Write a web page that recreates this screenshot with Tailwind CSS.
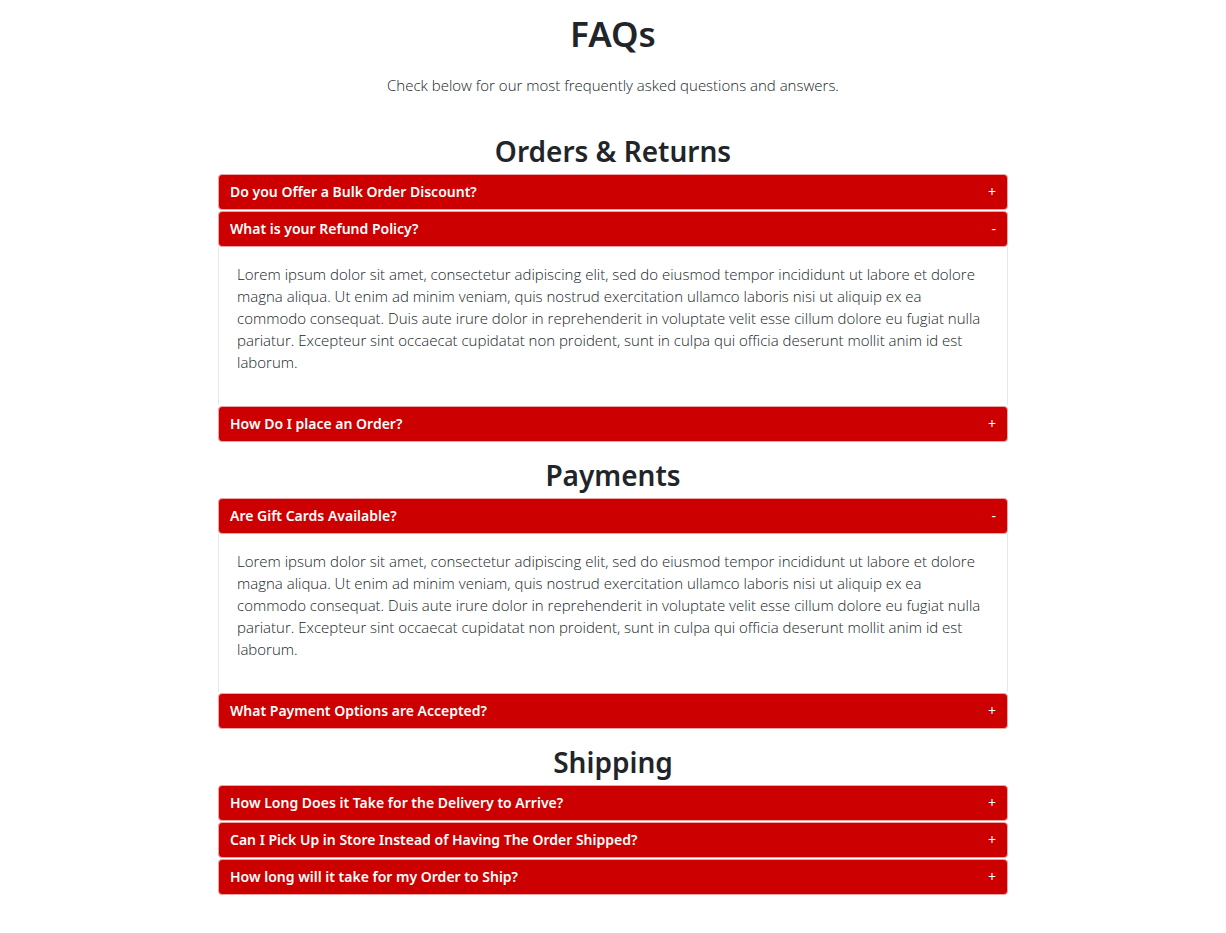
<!DOCTYPE html>
<html lang="en">
<head>
<meta charset="utf-8">
<meta name="viewport" content="width=device-width, initial-scale=1">
<title>FAQs</title>
<script src="https://cdn.jsdelivr.net/npm/@tailwindcss/browser@4"></script>
</head>
<body class="bg-white font-['Open_Sans',sans-serif] text-[15px] leading-[22px] font-light text-[#212529]">
<main class="mx-auto max-w-[790px] pt-3 pb-10">
  <h1 class="text-center font-['Noto_Sans',sans-serif] text-[35px] leading-[44px] font-[650]">FAQs</h1>
  <p class="mt-[18px] text-center">Check below for our most frequently asked questions and answers.</p>

  <section class="mt-9">
    <h2 class="mb-1 text-center font-['Noto_Sans',sans-serif] text-[28px] leading-[38px] font-[650]">Orders &amp; Returns</h2>
    <div class="flex flex-col gap-px">
      <div>
        <h3><button type="button" aria-expanded="false" aria-controls="bulk" class="group flex w-full items-center justify-between rounded-[4px] border border-[#eda6a6] bg-[#cc0000] px-[11px] py-1.5 text-left font-['Noto_Sans',sans-serif] text-[14px] font-[650] text-white"><span>Do you Offer a Bulk Order Discount?</span><span class="font-normal group-aria-expanded:hidden">+</span><span class="hidden font-normal group-aria-expanded:inline">-</span></button></h3>
        <div id="bulk" hidden class="border-x border-gray-200 px-[18px] pt-4 pb-[32px]"></div>
      </div>
      <div>
        <h3><button type="button" aria-expanded="true" aria-controls="refund" class="group flex w-full items-center justify-between rounded-[4px] border border-[#eda6a6] bg-[#cc0000] px-[11px] py-1.5 text-left font-['Noto_Sans',sans-serif] text-[14px] font-[650] text-white"><span>What is your Refund Policy?</span><span class="font-normal group-aria-expanded:hidden">+</span><span class="hidden font-normal group-aria-expanded:inline">-</span></button></h3>
        <div id="refund" class="border-x border-gray-200 px-[18px] pt-4 pb-[32px]"><p>Lorem ipsum dolor sit amet, consectetur adipiscing elit, sed do eiusmod tempor incididunt ut labore et dolore magna aliqua. Ut enim ad minim veniam, quis nostrud exercitation ullamco laboris nisi ut aliquip ex ea commodo consequat. Duis aute irure dolor in reprehenderit in voluptate velit esse cillum dolore eu fugiat nulla pariatur. Excepteur sint occaecat cupidatat non proident, sunt in culpa qui officia deserunt mollit anim id est laborum.</p></div>
      </div>
      <div>
        <h3><button type="button" aria-expanded="false" aria-controls="place" class="group flex w-full items-center justify-between rounded-[4px] border border-[#eda6a6] bg-[#cc0000] px-[11px] py-1.5 text-left font-['Noto_Sans',sans-serif] text-[14px] font-[650] text-white"><span>How Do I place an Order?</span><span class="font-normal group-aria-expanded:hidden">+</span><span class="hidden font-normal group-aria-expanded:inline">-</span></button></h3>
        <div id="place" hidden class="border-x border-gray-200 px-[18px] pt-4 pb-[32px]"></div>
      </div>
    </div>
  </section>

  <section class="mt-3.5">
    <h2 class="mb-1 text-center font-['Noto_Sans',sans-serif] text-[28px] leading-[38px] font-[650]">Payments</h2>
    <div class="flex flex-col gap-px">
      <div>
        <h3><button type="button" aria-expanded="true" aria-controls="gift" class="group flex w-full items-center justify-between rounded-[4px] border border-[#eda6a6] bg-[#cc0000] px-[11px] py-1.5 text-left font-['Noto_Sans',sans-serif] text-[14px] font-[650] text-white"><span>Are Gift Cards Available?</span><span class="font-normal group-aria-expanded:hidden">+</span><span class="hidden font-normal group-aria-expanded:inline">-</span></button></h3>
        <div id="gift" class="border-x border-gray-200 px-[18px] pt-4 pb-[32px]"><p>Lorem ipsum dolor sit amet, consectetur adipiscing elit, sed do eiusmod tempor incididunt ut labore et dolore magna aliqua. Ut enim ad minim veniam, quis nostrud exercitation ullamco laboris nisi ut aliquip ex ea commodo consequat. Duis aute irure dolor in reprehenderit in voluptate velit esse cillum dolore eu fugiat nulla pariatur. Excepteur sint occaecat cupidatat non proident, sunt in culpa qui officia deserunt mollit anim id est laborum.</p></div>
      </div>
      <div>
        <h3><button type="button" aria-expanded="false" aria-controls="options" class="group flex w-full items-center justify-between rounded-[4px] border border-[#eda6a6] bg-[#cc0000] px-[11px] py-1.5 text-left font-['Noto_Sans',sans-serif] text-[14px] font-[650] text-white"><span>What Payment Options are Accepted?</span><span class="font-normal group-aria-expanded:hidden">+</span><span class="hidden font-normal group-aria-expanded:inline">-</span></button></h3>
        <div id="options" hidden class="border-x border-gray-200 px-[18px] pt-4 pb-[32px]"></div>
      </div>
    </div>
  </section>

  <section class="mt-3.5">
    <h2 class="mb-1 text-center font-['Noto_Sans',sans-serif] text-[28px] leading-[38px] font-[650]">Shipping</h2>
    <div class="flex flex-col gap-px">
      <div>
        <h3><button type="button" aria-expanded="false" aria-controls="arrive" class="group flex w-full items-center justify-between rounded-[4px] border border-[#eda6a6] bg-[#cc0000] px-[11px] py-1.5 text-left font-['Noto_Sans',sans-serif] text-[14px] font-[650] text-white"><span>How Long Does it Take for the Delivery to Arrive?</span><span class="font-normal group-aria-expanded:hidden">+</span><span class="hidden font-normal group-aria-expanded:inline">-</span></button></h3>
        <div id="arrive" hidden class="border-x border-gray-200 px-[18px] pt-4 pb-[32px]"></div>
      </div>
      <div>
        <h3><button type="button" aria-expanded="false" aria-controls="pickup" class="group flex w-full items-center justify-between rounded-[4px] border border-[#eda6a6] bg-[#cc0000] px-[11px] py-1.5 text-left font-['Noto_Sans',sans-serif] text-[14px] font-[650] text-white"><span>Can I Pick Up in Store Instead of Having The Order Shipped?</span><span class="font-normal group-aria-expanded:hidden">+</span><span class="hidden font-normal group-aria-expanded:inline">-</span></button></h3>
        <div id="pickup" hidden class="border-x border-gray-200 px-[18px] pt-4 pb-[32px]"></div>
      </div>
      <div>
        <h3><button type="button" aria-expanded="false" aria-controls="ship" class="group flex w-full items-center justify-between rounded-[4px] border border-[#eda6a6] bg-[#cc0000] px-[11px] py-1.5 text-left font-['Noto_Sans',sans-serif] text-[14px] font-[650] text-white"><span>How long will it take for my Order to Ship?</span><span class="font-normal group-aria-expanded:hidden">+</span><span class="hidden font-normal group-aria-expanded:inline">-</span></button></h3>
        <div id="ship" hidden class="border-x border-gray-200 px-[18px] pt-4 pb-[32px]"></div>
      </div>
    </div>
  </section>
</main>
<script>
// Each question button opens and closes its own answer panel.
document.querySelectorAll('button[aria-controls]').forEach(function (button) {
  button.addEventListener('click', function () {
    var open = button.getAttribute('aria-expanded') === 'true';
    button.setAttribute('aria-expanded', String(!open));
    document.getElementById(button.getAttribute('aria-controls')).hidden = open;
  });
});
</script>
</body>
</html>
